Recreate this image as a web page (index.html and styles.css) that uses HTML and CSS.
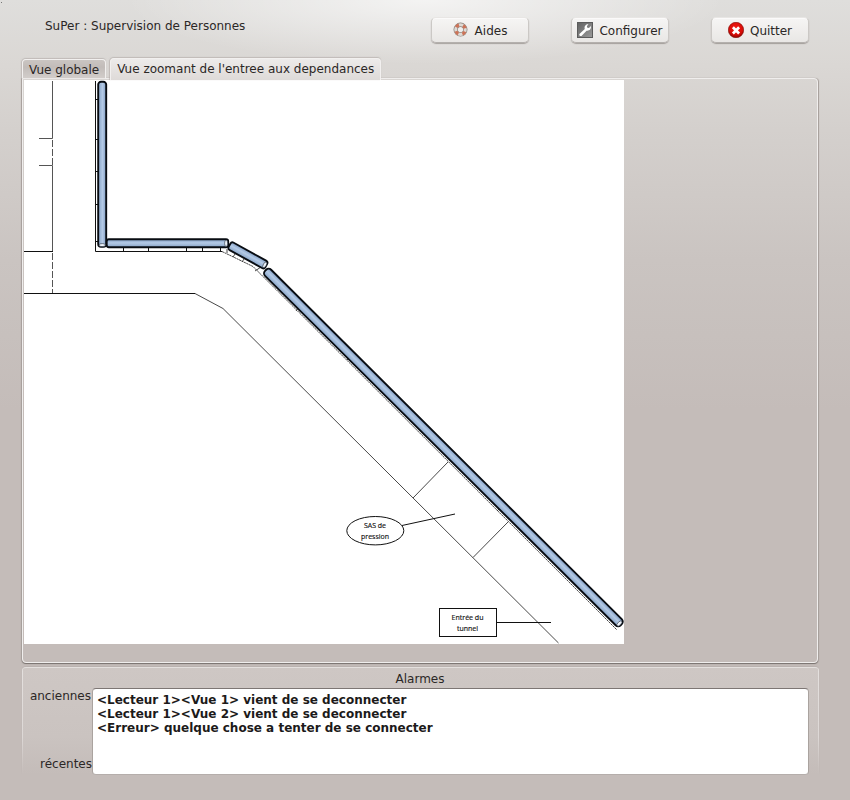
FILE: index.html
```html
<!DOCTYPE html>
<html lang="fr">
<head>
<meta charset="utf-8">
<title>SuPer : Supervision de Personnes</title>
<link rel="stylesheet" href="styles.css">
</head>
<body>
<header class="header">
  <h1 class="title">SuPer : Supervision de Personnes</h1>
  <nav class="actions">
    <button class="button" type="button">
      <svg class="icon" width="16" height="16" viewBox="0 0 16 16">
        <circle cx="7.500" cy="7.600" r="4.800" fill="none" stroke="#8b827c" stroke-width="4.400"/>
        <circle cx="7.500" cy="7.600" r="4.800" fill="none" stroke="#dedad5" stroke-width="3"/>
        <circle cx="7.500" cy="7.600" r="4.800" fill="none" stroke="#cc7358" stroke-width="3.200" stroke-dasharray="3.300 4.240" stroke-dashoffset="-2.100"/>
      </svg>
      <span>Aides</span>
    </button>
    <button class="button" type="button">
      <svg class="icon" width="16" height="16" viewBox="0 0 16 16">
        <defs><linearGradient id="steel" x1="0" y1="0" x2="1" y2="1"><stop offset="0" stop-color="#626262"/><stop offset="1" stop-color="#9b9b9b"/></linearGradient></defs>
        <rect x=".5" y=".5" width="15" height="15" fill="url(#steel)" stroke="#5c5c5c"/>
        <path d="M2.400 12 7.800 7C7 4.700 8.600 2.200 11.500 2.100L9.900 4.300 10.300 5.800 12 6 13.900 4.100C14.500 7.200 12 9.300 9.600 8.700L4.500 13.900C3.200 14.500 1.800 13.300 2.400 12Z" fill="#fff"/>
      </svg>
      <span>Configurer</span>
    </button>
    <button class="button" type="button">
      <svg class="icon" width="16" height="16" viewBox="0 0 16 16">
        <defs><radialGradient id="stop" cx=".5" cy=".35" r=".65"><stop offset="0" stop-color="#f01c14"/><stop offset=".7" stop-color="#d80c08"/><stop offset="1" stop-color="#8c0500"/></radialGradient></defs>
        <circle cx="8" cy="8" r="7.700" fill="url(#stop)" stroke="#7d0a05" stroke-width=".6"/>
        <path d="M4.900 5.300 11.100 11.500M11.100 5.300 4.900 11.500" stroke="#fff" stroke-width="2.700" fill="none"/>
      </svg>
      <span>Quitter</span>
    </button>
  </nav>
</header>

<main class="main">
  <div class="tabs">
    <div class="tab">Vue globale</div>
    <div class="tab tab-active">Vue zoomant de l'entree aux dependances</div>
  </div>
  <section class="view">
    <svg class="plan" width="600" height="564" viewBox="24 80 600 564">
      <defs>
        <linearGradient id="tube" x1="0" y1="0" x2="0" y2="1">
          <stop offset="0" stop-color="#7f9cc2"/><stop offset=".45" stop-color="#b4cae6"/><stop offset="1" stop-color="#86a3c6"/>
        </linearGradient>
      </defs>
      <rect x="24" y="80" width="600" height="564" fill="#fff"/>
      <g fill="none" stroke="#555" stroke-width="1">
        <path d="M52.500 81V138.500H39M39 165.500H52.500V251"/>
        <path d="M52.500 140V165M52.500 253V293" stroke-dasharray="7 2"/>
      </g>
      <g fill="none" stroke="#111" stroke-width="1">
        <path d="M24 251.500H53M24 293.500H195M95.500 81V251.500H222"/>
        <path d="M95 99.500H98M95 139.500H98M95 171.500H98M95 204.500H98M95 241.500H98M123.500 248V251M148.500 248V251M186.500 248V251M202.500 248V251M220.500 248V251"/>
      </g>
      <g fill="none" stroke="#333" stroke-width=".9">
        <path d="M195 293.500 223 308.500 558.500 643M448 462 413 498M508 522 473 557.500"/>
        <path d="M222 251.500 253 266.500 617 630" stroke-dasharray="2.200 .5"/>
        <path d="M227 249V253M235 254 233 257M244 259 242 262M261 267 255 271M299 307 296 311M350 357 347 360M432 437 429 440M500 508 497 511"/>
      </g>
      <g fill="url(#tube)" stroke="#080c12" stroke-width="1.900">
        <rect x="0" y="0" width="165" height="8" rx="2.800" transform="translate(106.200 81.800) rotate(90)"/>
        <rect x="106.700" y="239.300" width="121.500" height="7.900" rx="2.200"/>
        <rect x="0" y="-4.200" width="42" height="8.400" rx="2.500" transform="translate(229.500 245.200) rotate(29)"/>
        <rect x="0" y="-4.300" width="502" height="8.600" rx="3.500" transform="translate(265.600 270.300) rotate(44.900)"/>
      </g>
      <g fill="#eef4fc" stroke="#222b38" stroke-width=".6">
        <ellipse cx="102.200" cy="245.100" rx="3.200" ry="1.500"/>
        <ellipse cx="226.100" cy="243.300" rx="1.500" ry="3.200"/>
        <ellipse cx="264.800" cy="264.800" rx="1.500" ry="3.200" transform="rotate(29 264.800 264.800)"/>
        <ellipse cx="619.400" cy="623.500" rx="1.600" ry="3.200" transform="rotate(45 619.400 623.500)"/>
      </g>
      <g stroke="#111" stroke-width="1">
        <ellipse cx="375.300" cy="530.700" rx="28.500" ry="14.200" fill="#fff"/>
        <path d="M402 525.500 455 514"/>
        <rect x="439.500" y="608.500" width="57" height="28" fill="#fff"/>
        <path d="M496.500 622.500H551"/>
      </g>
      <g class="plan-label">
        <text x="375" y="528" textLength="22" lengthAdjust="spacingAndGlyphs">SAS de</text>
        <text x="375" y="539" textLength="28" lengthAdjust="spacingAndGlyphs">pression</text>
        <text x="467.500" y="620" textLength="32" lengthAdjust="spacingAndGlyphs">Entrée du</text>
        <text x="467.500" y="631" textLength="21" lengthAdjust="spacingAndGlyphs">tunnel</text>
      </g>
    </svg>
  </section>
</main>

<section class="alarms">
  <h2 class="alarms-title">Alarmes</h2>
  <div class="alarms-body">
    <div class="age-labels"><span class="older">anciennes</span><span>récentes</span></div>
    <div class="log">
      <div>&lt;Lecteur 1&gt;&lt;Vue 1&gt; vient de se deconnecter</div>
      <div>&lt;Lecteur 1&gt;&lt;Vue 2&gt; vient de se deconnecter</div>
      <div>&lt;Erreur&gt; quelque chose a tenter de se connecter</div>
    </div>
  </div>
</section>
</body>
</html>
```
FILE: styles.css
```css
* { box-sizing: border-box; }
body {
  margin: 0;
  width: 850px;
  height: 800px;
  overflow: hidden;
  font: 12px/14px "DejaVu Sans", sans-serif;
  color: #2b2726;
  background:
    linear-gradient(#777, #777) 1px 2px / 1px 1px no-repeat,
    radial-gradient(ellipse 300px 64px at 425px 0, rgba(255,255,255,.65), rgba(255,255,255,0)),
    linear-gradient(#dfdedc 0, #dad7d4 66px, #d4d0cd 130px, #cac4c1 260px, #c4bcb9 410px, #c4bcb9 800px);
}
.header {
  display: flex;
  justify-content: space-between;
  height: 58px;
  padding: 17px 41px 0 45px;
}
.title { margin: 2px 0 0; font-size: 12px; font-weight: 400; line-height: 14px; }
.actions { display: flex; gap: 42px; }
.button {
  display: flex;
  align-items: center;
  justify-content: center;
  gap: 6px;
  width: 98px;
  height: 26px;
  padding: 0;
  border: 1px solid #cbc8c5;
  border-top-color: #e8e6e4;
  border-bottom-color: #b4b0ad;
  border-radius: 5px;
  background: linear-gradient(#f6f5f4, #e9e7e5);
  box-shadow: 0 1px 1px rgba(80,70,65,.4), inset 0 1px #fbfafa;
  font: inherit;
  color: inherit;
}
.button span { padding-top: 1px; }
.icon { flex: none; }
.main { padding: 0 32px 0 21px; }
.tabs { display: flex; align-items: flex-end; gap: 4px; height: 20px; padding-left: 1px; }
.tab {
  height: 19px;
  padding: 3px 6px 0;
  white-space: nowrap;
  border: 1px solid #f2f0ef;
  border-bottom: 0;
  border-radius: 4px 4px 0 0;
  background: linear-gradient(#cac5c2, #c2bcb9 40%, #d2cdca);
  box-shadow: 0 -1px 1px #aaa4a188, -1px 0 1px #aaa4a188;
}
.tab-active {
  height: 22px;
  margin-bottom: -2px;
  position: relative;
  width: 271px;
  background: linear-gradient(#edebea, #dedad8);
}
.view {
  height: 585px;
  margin-left: 1px;
  padding: 1px;
  border: 1px solid #f0eeed;
  border-radius: 0 4px 4px 4px;
  box-shadow: 0 1px 1px #77706d, 1px 0 1px #aaa39f, -1px 0 1px #aaa39f;
}
.plan { display: block; }
.plan-label {
  font: 7px "Open Sans", sans-serif;
  fill: #111;
  stroke: #111;
  stroke-width: .15px;
  text-anchor: middle;
}
.alarms {
  height: 107px;
  margin: 4px 31px 0 22px;
  padding: 4px 10px 0 1px;
  border-top: 1px solid #e4e0de;
  border-radius: 4px 4px 0 0;
  background:
    linear-gradient(#e4e0de, #ddd8d6 65%, #c4bcb9) left / 1px 100% no-repeat,
    linear-gradient(#e4e0de, #ddd8d6 65%, #c4bcb9) right / 1px 100% no-repeat,
    linear-gradient(#cec7c4, #cac3c0 65%, #c4bcb9);
  box-shadow: 0 -1px 1px #aaa39f66;
}
.alarms-title { margin: 0; padding-left: 8px; font-size: 12px; font-weight: 400; line-height: 14px; text-align: center; }
.alarms-body { display: flex; margin-top: 2px; }
.age-labels {
  display: flex;
  flex-direction: column;
  justify-content: space-between;
  align-items: flex-end;
  width: 69px;
  height: 83px;
  padding-top: 1px;
}
.older { padding-right: 1px; }
.log {
  flex: 1;
  height: 87px;
  padding: 4px;
  font-weight: 700;
  color: #1c1a1a;
  background: #fff;
  border: 1px solid #aaa39f;
  border-top-color: #7d7674;
  border-bottom-color: #b5aeab;
  border-radius: 4px;
}
```
